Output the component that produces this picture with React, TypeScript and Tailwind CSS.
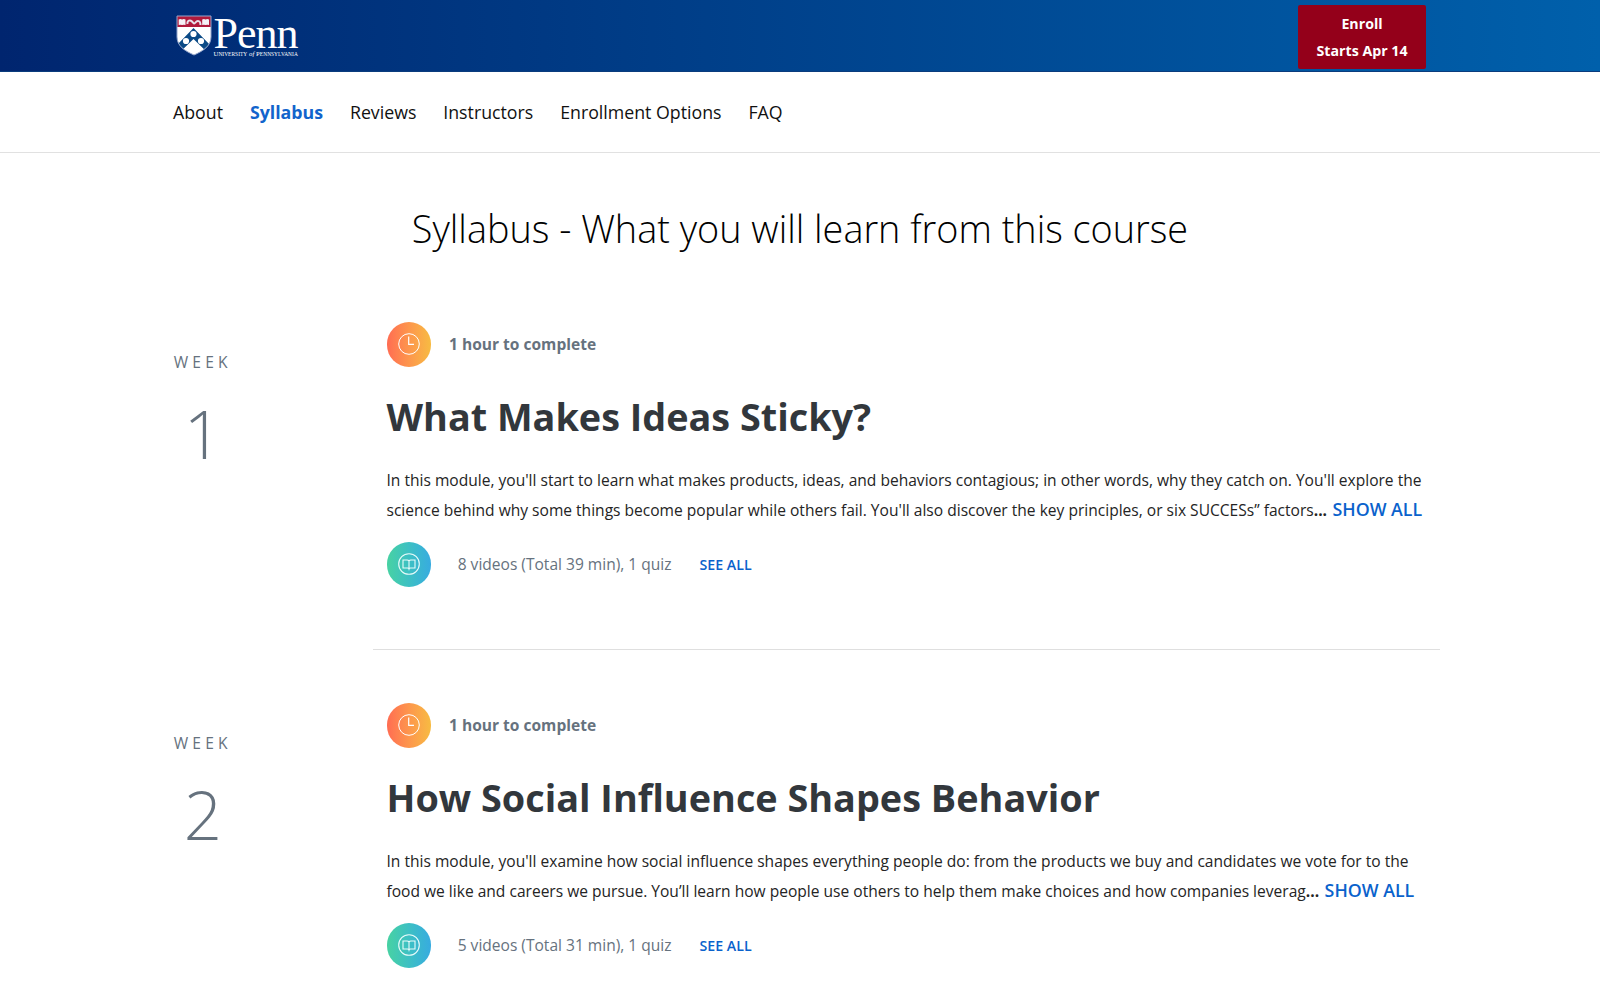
import React from "react";

const NAV = ["About", "Syllabus", "Reviews", "Instructors", "Enrollment Options", "FAQ"];

const WEEKS = [
  {
    number: "1",
    title: "What Makes Ideas Sticky?",
    first: "In this module, you'll start to learn what makes products, ideas, and behaviors contagious; in other words, why they catch on. You'll explore the",
    second: "science behind why some things become popular while others fail. You'll also discover the key principles, or six SUCCESs” factors",
    content: "8 videos (Total 39 min), 1 quiz",
  },
  {
    number: "2",
    title: "How Social Influence Shapes Behavior",
    first: "In this module, you'll examine how social influence shapes everything people do: from the products we buy and candidates we vote for to the",
    second: "food we like and careers we pursue. You’ll learn how people use others to help them make choices and how companies leverag",
    content: "5 videos (Total 31 min), 1 quiz",
  },
];

function Shield() {
  return (
    <svg width="36" height="41" viewBox="0 0 36 41" className="shrink-0">
      <defs>
        <clipPath id="shield">
          <path d="M1 1H35V22C35 31 27 36 18 40C9 36 1 31 1 22Z" />
        </clipPath>
      </defs>
      <g clipPath="url(#shield)">
        <rect width="36" height="41" fill="#fff" />
        <rect width="36" height="12" fill="#b01a3c" />
        <path d="M0 31L17.500 13L35 31V41L17.500 24L0 41Z" fill="#0b4a86" />
        <circle cx="17.500" cy="19" r="3.100" fill="#fff" />
        <circle cx="10" cy="26" r="3.100" fill="#fff" />
        <circle cx="25" cy="26" r="3.100" fill="#fff" />
      </g>
      <path d="M2.700 4.500q1.700-.8 3.400 0q1.700-.8 3.400 0v5.500q-1.700-.6-3.400 0q-1.700-.6-3.400 0zM26.200 4.500q1.700-.8 3.400 0q1.700-.8 3.400 0v5.500q-1.700-.6-3.400 0q-1.700-.6-3.400 0z" fill="#f4f1f6" />
      <path d="M11.500 9C11 5.500 14 4.500 16 6.500S18 9.500 19.500 7.500S24.500 5 24.500 10" fill="none" stroke="#e8e0ea" strokeWidth="2" />
      <path d="M1 1H35V22C35 31 27 36 18 40C9 36 1 31 1 22Z" fill="none" stroke="#93a5cb" strokeWidth="1" />
    </svg>
  );
}

function ClockIcon() {
  return (
    <span className="flex h-[44.500px] w-[44.500px] shrink-0 items-center justify-center rounded-full bg-linear-to-r from-[#ff6c52] to-[#f7bb42]">
      <svg width="22" height="22" viewBox="0 0 22 22" fill="none" stroke="#fff" strokeWidth="1.200">
        <circle cx="11" cy="11" r="10.300" strokeWidth="1" />
        <path d="M10.700 3.400V11.300H16" />
      </svg>
    </span>
  );
}

function BookIcon() {
  return (
    <span className="flex h-[44.500px] w-[44.500px] shrink-0 items-center justify-center rounded-full bg-linear-to-r from-[#48d2a2] to-[#38abe0]">
      <svg width="22" height="22" viewBox="0 0 22 22" fill="none" stroke="#e8fbfa" strokeWidth="1.100">
        <circle cx="11" cy="11" r="10.300" />
        <path d="M11 8Q10.600 7 9 7H5V15H9.500Q10.700 15 11 16Q11.300 15 12.500 15H17V7H13Q11.400 7 11 8V16" />
      </svg>
    </span>
  );
}

type Week = (typeof WEEKS)[number];

function WeekBlock({ week }: { week: Week }) {
  return (
    <section className="flex h-[328px] shrink-0">
      <div className="w-[200px] shrink-0 pt-[20px] text-[#66727e]">
        <div className="flex w-[59.500px] flex-col items-center whitespace-nowrap">
          <div className="text-[15.600px] leading-[40px] tracking-[4.200px]">WEEK</div>
          <div className="mt-[6px] text-[67px] font-light leading-[91px]">{week.number}</div>
        </div>
      </div>
      <div className="w-[1067px] whitespace-nowrap border-b border-[#dfdfdf] pl-[13.500px]">
        <div className="flex items-center gap-[18px]">
          <ClockIcon />
          <span className="text-[15.550px] font-bold leading-[24px] text-[#66727e]">1 hour to complete</span>
        </div>
        <h2 className="mt-[23px] text-[37.800px] font-bold leading-[54px] text-[#32373c]">{week.title}</h2>
        <div className="mt-[22.500px] text-[15.570px] leading-[29.600px] text-[#242424]">
          <p>{week.first}</p>
          <p className="h-[29.600px]">
            <span>{week.second}</span>
            <b className="mr-[1.500px]">... </b>
            <span className="text-[17.800px] font-semibold leading-[24px] text-[#0a62cc]">SHOW ALL</span>
          </p>
        </div>
        <div className="mt-[17px] flex items-center">
          <BookIcon />
          <span className="ml-[26.700px] text-[15.550px] text-[#66727e]">{week.content}</span>
          <span className="ml-[28px] text-[14.200px] font-semibold text-[#0a62cc]">SEE ALL</span>
        </div>
      </div>
    </section>
  );
}

export default function App() {
  return (
    <div className="h-[1000px] w-[1600px] overflow-hidden bg-white font-['Open_Sans',sans-serif]">
      <header className="flex h-[72px] justify-between border-b border-[#0a3c7d] bg-linear-to-r from-[#00256f] to-[#0060ab] pl-[175.500px] pr-[174px]">
        <div className="flex pt-[15px] text-white">
          <Shield />
          <div className="ml-[2px] flex flex-col whitespace-nowrap font-['Liberation_Serif',serif]">
            <span className="text-[44px] leading-[38px] tracking-[-1px]">Penn</span>
            <span className="mt-[-2px] text-[6.700px] leading-[6px] tracking-[0.050px]">
              U<span className="text-[5.400px]">NIVERSITY</span> <i>of</i> P<span className="text-[5.400px]">ENNSYLVANIA</span>
            </span>
          </div>
        </div>
        <button className="mt-[4.500px] flex h-[64px] w-[128px] flex-col items-center justify-center rounded-[2px] bg-[#94001a] pt-px text-[14.200px] font-bold leading-[27px] text-white">
          <span>Enroll</span>
          <span>Starts Apr 14</span>
        </button>
      </header>
      <nav className="flex h-[81px] items-center gap-[26.900px] border-b border-[#e1e1e1] pl-[173px] text-[17.750px] text-[#111]">
        {NAV.map((item) => (
          <span key={item} className={item === "Syllabus" ? "font-bold text-[#1264cc]" : ""}>
            {item}
          </span>
        ))}
      </nav>
      <h1 className="mt-[49px] text-center text-[37.800px] font-light leading-[54px] text-black">
        Syllabus - What you will learn from this course
      </h1>
      <main className="mt-[66px] flex flex-col gap-[53px] pl-[173px]">
        {WEEKS.map((week) => (
          <WeekBlock key={week.number} week={week} />
        ))}
      </main>
    </div>
  );
}
